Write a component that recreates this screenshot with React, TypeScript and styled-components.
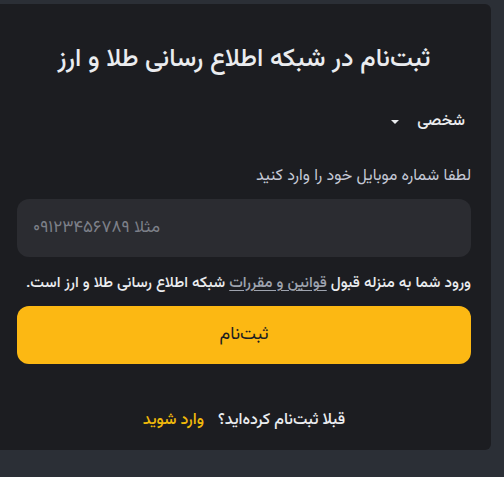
import React from "react";
import styled, { createGlobalStyle } from "styled-components";

const Global = createGlobalStyle`
  html, body { margin: 0; padding: 0; background: #2b2f36; overflow: hidden; }
  body { font-family: "Vazirmatn", "DejaVu Sans", sans-serif; }
`;

const Page = styled.div`
  width: 504px;
  height: 477px;
  padding: 4px 13px 0 0;
  box-sizing: border-box;
  direction: rtl;
`;

const Card = styled.div`
  width: 491px;
  height: 446px;
  background: #1c1d21;
  border-radius: 0 6px 6px 0;
  box-sizing: border-box;
  padding: 40px 20px 0 17px;
  display: flex;
  flex-direction: column;
`;

const Title = styled.h1`
  margin: 0;
  text-align: center;
  color: #eaecef;
  font-size: 25.5px;
  font-weight: 500;
  line-height: 32px;
`;

const SelectRow = styled.div`
  margin-top: 34px;
  display: flex;
  align-items: center;
  gap: 18px;
  color: #eaecef;
  font-size: 16px;
  font-weight: 500;
  line-height: 24px;
  padding-right: 6px;
`;

const Caret = styled.span`
  width: 0;
  height: 0;
  border-left: 4px solid transparent;
  border-right: 4px solid transparent;
  border-top: 4px solid #eaecef;
`;

const Label = styled.label`
  margin-top: 31px;
  color: #c5c9d6;
  font-size: 16px;
  line-height: 24px;
`;

const Input = styled.input`
  margin-top: 10px;
  height: 58px;
  border: none;
  outline: none;
  border-radius: 12px;
  background: #2b2c31;
  padding: 0 16px;
  color: #eaecef;
  font-family: inherit;
  font-size: 17px;
  direction: ltr;
  text-align: left;
  &::placeholder { color: #7d8089; }
`;

const Terms = styled.p`
  margin: 14px 0 0;
  color: #eaecef;
  font-size: 15.3px;
  font-weight: 500;
  line-height: 24px;
`;

const TermsLink = styled.a`
  color: #9ea3ae;
  text-decoration: underline;
  text-underline-offset: 3px;
`;

const Submit = styled.button`
  margin-top: 11px;
  height: 58px;
  border: none;
  border-radius: 12px;
  background: #fcb813;
  color: #1c1d21;
  font-family: inherit;
  font-size: 18px;
  cursor: pointer;
`;

const Footer = styled.p`
  margin: 45px 0 0;
  text-align: center;
  color: #eaecef;
  font-size: 16px;
  font-weight: 500;
  line-height: 24px;
`;

const LoginLink = styled.a`
  color: #f0b90b;
  margin-right: 14px;
  text-decoration: none;
`;

export default function App() {
  return (
    <>
      <Global />
      <Page>
        <Card>
          <Title>ثبت‌نام در شبکه اطلاع رسانی طلا و ارز</Title>
          <SelectRow>
            <span>شخصی</span>
            <Caret />
          </SelectRow>
          <Label>لطفا شماره موبایل خود را وارد کنید</Label>
          <Input placeholder="مثلا ۰۹۱۲۳۴۵۶۷۸۹" />
          <Terms>
            ورود شما به منزله قبول <TermsLink>قوانین و مقررات</TermsLink> شبکه اطلاع رسانی طلا و ارز است.
          </Terms>
          <Submit>ثبت‌نام</Submit>
          <Footer>
            قبلا ثبت‌نام کرده‌اید؟<LoginLink>وارد شوید</LoginLink>
          </Footer>
        </Card>
      </Page>
    </>
  );
}
